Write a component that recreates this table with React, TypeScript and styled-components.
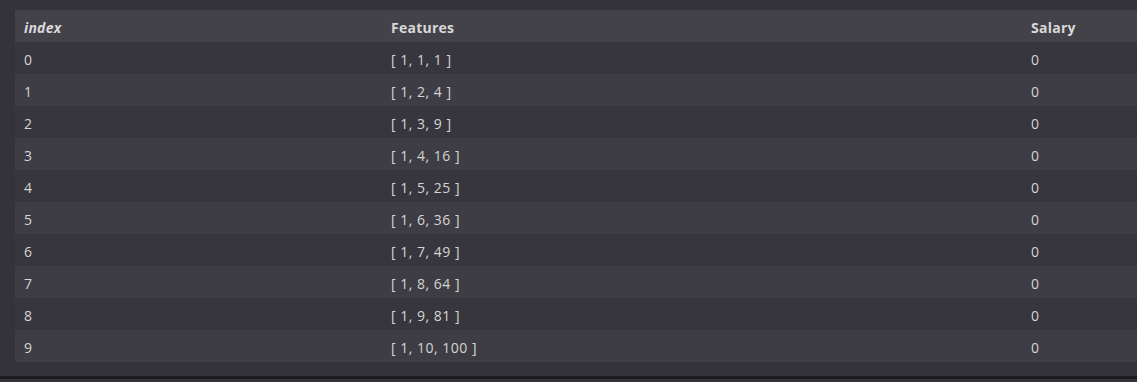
import React from "react";
import styled, { createGlobalStyle } from "styled-components";

const Global = createGlobalStyle`
  html, body { margin: 0; padding: 0; background: #343339; overflow: hidden; }
  body { font-family: "Open Sans", "Noto Sans", sans-serif; }
`;

const Page = styled.div`
  height: 379px;
  width: 1137px;
  box-sizing: border-box;
  padding: 10px 0 0 15px;
  background: #343339;
  border-bottom: 3px solid #1c1c1e;
  overflow: hidden;
`;

const Table = styled.div`
  width: 1140px;
  display: flex;
  flex-direction: column;
`;

const Row = styled.div<{ $variant: "head" | "even" | "odd" }>`
  display: grid;
  grid-template-columns: 367px 640px 1fr;
  height: 32px;
  box-sizing: border-box;
  padding-top: 2px;
  align-items: center;
  background: ${(p) =>
    p.$variant === "head" ? "#434248" : p.$variant === "odd" ? "#3e3d43" : "#37363c"};
`;

const Cell = styled.div<{ $head?: boolean; $italic?: boolean }>`
  padding-left: 9px;
  font-size: 14px;
  letter-spacing: ${(p) => (p.$head ? "0.25px" : "0.5px")};
  color: ${(p) => (p.$head ? "#d8d8da" : "#d4d4d6")};
  font-weight: ${(p) => (p.$head ? 700 : 400)};
  font-style: ${(p) => (p.$italic ? "italic" : "normal")};
  white-space: nowrap;
`;

const data = Array.from({ length: 10 }, (_, i) => ({
  index: i,
  features: `[ 1, ${i + 1}, ${(i + 1) * (i + 1)} ]`,
  salary: 0,
}));

export default function App() {
  return (
    <>
      <Global />
      <Page>
        <Table>
          <Row $variant="head">
            <Cell $head $italic>index</Cell>
            <Cell $head>Features</Cell>
            <Cell $head>Salary</Cell>
          </Row>
          {data.map((d) => (
            <Row key={d.index} $variant={d.index % 2 === 1 ? "odd" : "even"}>
              <Cell>{d.index}</Cell>
              <Cell>{d.features}</Cell>
              <Cell>{d.salary}</Cell>
            </Row>
          ))}
        </Table>
      </Page>
    </>
  );
}
